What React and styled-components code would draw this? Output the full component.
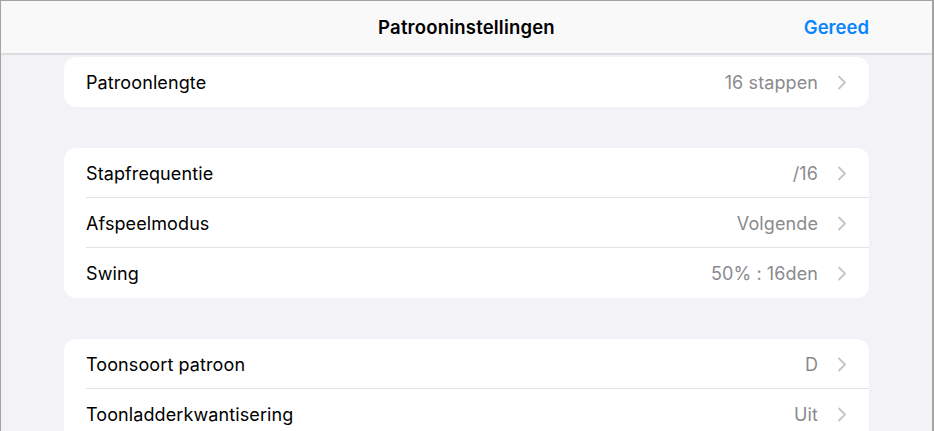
import styled, { createGlobalStyle } from 'styled-components';

const GlobalStyle = createGlobalStyle`
  html, body {
    margin: 0;
    padding: 0;
    background: #f2f2f7;
  }
  * { box-sizing: border-box; }
`;

const groups = [
  [{ label: 'Patroonlengte', value: '16 stappen' }],
  [
    { label: 'Stapfrequentie', value: '/16' },
    { label: 'Afspeelmodus', value: 'Volgende' },
    { label: 'Swing', value: '50% : 16den' },
  ],
  [
    { label: 'Toonsoort patroon', value: 'D' },
    { label: 'Toonladderkwantisering', value: 'Uit' },
  ],
];

const Chevron = () => (
  <svg width="10" height="15" viewBox="0 0 10 15" fill="none">
    <path d="M2 1.5 L8 7.5 L2 13.5" stroke="#c4c4c7" strokeWidth="1.8" strokeLinecap="round" strokeLinejoin="round" />
  </svg>
);

const App = () => {
  return (
    <Frame>
      <GlobalStyle />
      <Header>
        <Title>Patrooninstellingen</Title>
        <Done>Gereed</Done>
      </Header>
      <Content>
        {groups.map((rows, gi) => (
          <Card key={gi}>
            {rows.map((r, ri) => (
              <Row key={r.label} $last={ri === rows.length - 1}>
                <Label>{r.label}</Label>
                <Value>{r.value}</Value>
                <Chevron />
              </Row>
            ))}
          </Card>
        ))}
      </Content>
    </Frame>
  );
};

const Frame = styled.div`
  width: 934px;
  height: 431px;
  overflow: hidden;
  border: 1px solid #a4a4a4;
  border-bottom: none;
  border-right-width: 2px;
  background: #f2f2f7;
  font-family: Inter, "Noto Sans", sans-serif;
  display: flex;
  flex-direction: column;
`;

const Header = styled.div`
  height: 54px;
  flex-shrink: 0;
  background: #f9f9f9;
  border-bottom: 2px solid #dedee2;
  display: flex;
  align-items: center;
  justify-content: center;
  position: relative;
  padding: 0 63px;
`;

const Title = styled.div`
  font-size: 18.5px;
  font-weight: 600;
  color: #000;
  letter-spacing: 0.2px;
`;

const Done = styled.div`
  position: absolute;
  right: 63px;
  font-size: 18.5px;
  font-weight: 600;
  color: #0a84ff;
`;

const Content = styled.div`
  padding: 2px 63px 0;
  display: flex;
  flex-direction: column;
  gap: 41px;
`;

const Card = styled.div`
  background: #fff;
  border-radius: 12px;
  padding-left: 22px;
`;

const Row = styled.div`
  height: 50px;
  display: flex;
  align-items: center;
  padding: 1px 22px 0 0;
  border-bottom: ${p => (p.$last ? 'none' : '1px solid #e2e2e4')};
`;

const Label = styled.div`
  flex: 1;
  font-size: 18px;
  color: #000;
  letter-spacing: 0.1px;
`;

const Value = styled.div`
  font-size: 18px;
  color: #8a8a8e;
  letter-spacing: 0.1px;
  margin-right: 19px;
`;

export default App;
